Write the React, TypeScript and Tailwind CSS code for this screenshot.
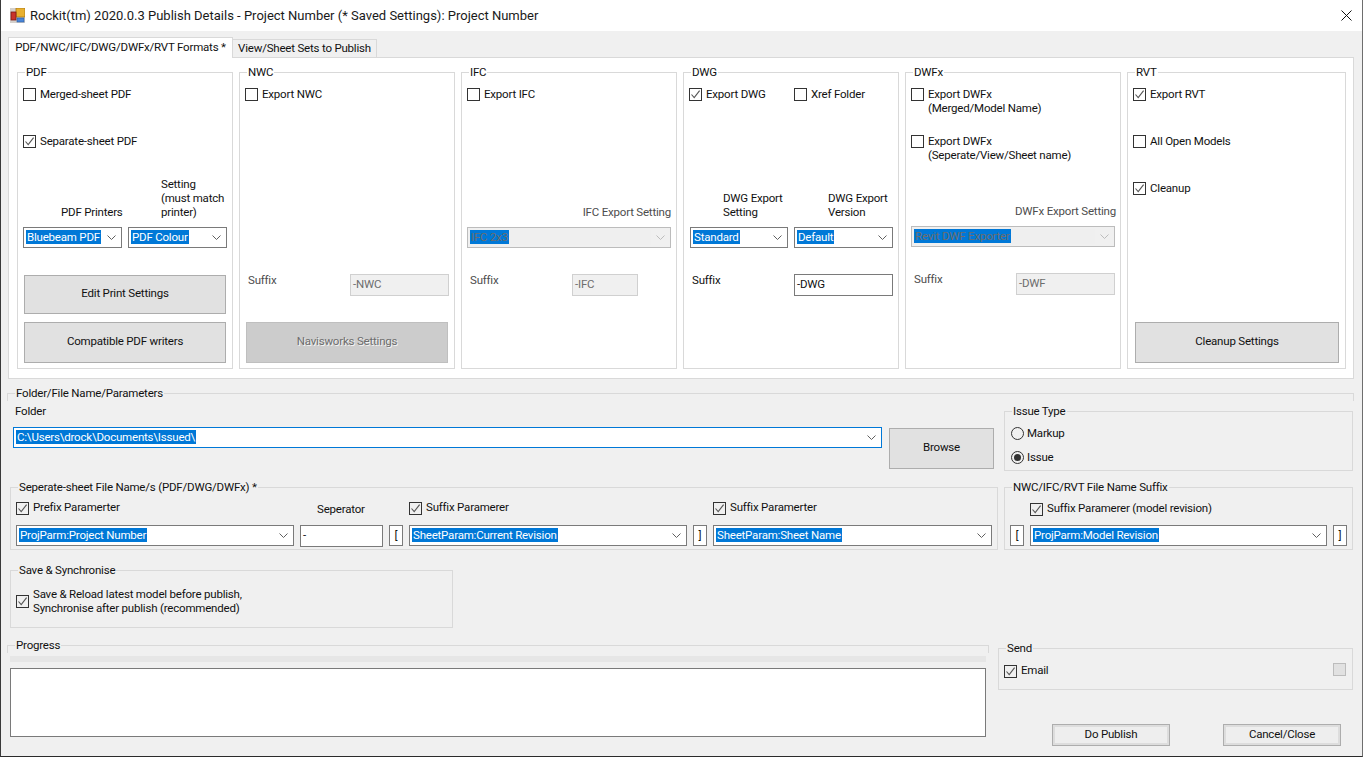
import type { ReactNode } from "react";

const Chevron = ({ disabled = false }: { disabled?: boolean }) => (
  <svg width="9" height="5" viewBox="0 0 9 5" className="shrink-0" fill="none">
    <path d="M0.5 0.5 L4.5 4.5 L8.5 0.5" stroke={disabled ? "#bcbcbc" : "#606060"} strokeWidth="1" />
  </svg>
);

const Tick = () => (
  <svg width="11" height="11" viewBox="0 0 11 11" fill="none">
    <path d="M1.5 5.5 L4.2 8.6 L9.6 1.6" stroke="#555555" strokeWidth="1.1" />
  </svg>
);

const Check = ({ checked = false, className = "", labelClass = "-mt-[1px]", children }: { checked?: boolean; className?: string; labelClass?: string; children?: ReactNode }) => (
  <div className={`flex items-start gap-[4px] ${className}`}>
    <div className="w-[13px] h-[13px] shrink-0 border border-[#333333] flex items-center justify-center">
      {checked && <Tick />}
    </div>
    <div className={`leading-[14px] whitespace-nowrap ${labelClass}`}>{children}</div>
  </div>
);

const Radio = ({ checked = false, children }: { checked?: boolean; children: ReactNode }) => (
  <div className="flex items-center gap-[3px] h-[13px]">
    <div className="w-[13px] h-[13px] rounded-full border border-[#333333] flex items-center justify-center">
      {checked && <div className="w-[7px] h-[7px] rounded-full bg-[#333333]" />}
    </div>
    <div className="leading-[14px] -mt-[1px]">{children}</div>
  </div>
);

const Select = ({ value, className = "", disabled = false, focused = false }: { value: string; className?: string; disabled?: boolean; focused?: boolean }) => (
  <div
    className={`h-[21px] flex items-center pl-[2px] pr-[5px] border shrink-0 ${
      disabled ? "border-[#bcbcbc] bg-[#f0f0f0]" : focused ? "border-[#0078d7] bg-white" : "border-[#7a7a7a] bg-white"
    } ${className}`}
  >
    <div className={`flex-1 min-w-0 h-[15px] mr-[5px] ${disabled ? "bg-[#efefef]" : ""}`}>
      <span
        className={`block w-fit h-[14px] leading-[14px] px-[1px] whitespace-nowrap bg-[#0078d7] ${
          disabled ? "text-[#6d6d6d]" : "text-white"
        }`}
      >
        {value}
      </span>
    </div>
    <Chevron disabled={disabled} />
  </div>
);

const TextBox = ({ value, className = "", disabled = false }: { value: string; className?: string; disabled?: boolean }) => (
  <div
    className={`h-[22px] flex items-center px-[2px] shrink-0 border ${
      disabled ? "border-[#d0d0d0] bg-[#f0f0f0] text-[#6d6d6d]" : "border-[#7a7a7a] bg-white"
    } ${className}`}
  >
    {value}
  </div>
);

const Bracket = ({ value }: { value: string }) => (
  <div className="w-[14px] h-[21px] shrink-0 border border-[#7a7a7a] bg-white flex items-center justify-center">{value}</div>
);

const Btn = ({ label, className = "", disabled = false }: { label: string; className?: string; disabled?: boolean }) => (
  <div
    className={`flex items-center justify-center shrink-0 border pb-[2px] ${
      disabled
        ? "bg-[#cccccc] border-[#bfbfbf] text-[#6d6d6d] [text-shadow:1px_1px_0_#f4f4f4]"
        : "bg-[#e1e1e1] border-[#adadad]"
    } ${className}`}
  >
    {label}
  </div>
);

const Legend = ({ title, bg = "bg-[#f0f0f0]" }: { title: string; bg?: string }) => (
  <div className={`absolute -top-[8px] left-[7px] px-[1px] leading-[14px] whitespace-nowrap ${bg}`}>{title}</div>
);

const Panel = ({ title, className = "w-[216px]", children }: { title: string; className?: string; children: ReactNode }) => (
  <div className={`relative h-[297px] shrink-0 border border-[#d9d9d9] pl-[5px] pt-[15px] ${className}`}>
    <Legend title={title} bg="bg-white" />
    {children}
  </div>
);

// two-line/three-line caption above a combo
const Caption = ({ lines, className = "" }: { lines: string[]; className?: string }) => (
  <div className={`leading-[14px] ${className}`}>
    {lines.map((l) => (
      <div key={l} className="whitespace-nowrap">
        {l}
      </div>
    ))}
  </div>
);

const SuffixRow = ({ value, inputClass, disabled = true, labelClass = "text-[#4d4d4d]", className = "mt-[26px]" }: { value: string; inputClass: string; disabled?: boolean; labelClass?: string; className?: string }) => (
  <div className={`flex items-start h-[22px] ${className}`}>
    <div className={`ml-[3px] -mt-[1px] w-[102px] leading-[14px] ${labelClass}`}>Suffix</div>
    <TextBox value={value} disabled={disabled} className={inputClass} />
  </div>
);

const App = () => {
  return (
    <div className="w-[1363px] h-[757px] overflow-hidden bg-[#f0f0f0] border-l border-r border-b border-l-[#3a3a3a] border-r-[#6e6e6e] border-b-[#2b2b2b] text-[11.5px] tracking-[-0.2px] text-[#111111] font-['Roboto',sans-serif]">
      {/* Title bar */}
      <div className="h-[31px] bg-white flex items-center pl-[9px] pr-[9px] text-[13px] tracking-normal text-[#1a1a1a]">
        <svg width="15" height="15" viewBox="0 0 15 15" className="shrink-0">
          <rect x="0" y="0" width="15" height="15" fill="#d4d0cc" />
          <rect x="6" y="0" width="9" height="9" fill="#e8b030" stroke="#a87818" strokeWidth="0.8" />
          <rect x="1" y="4" width="5" height="8" fill="#c8342c" stroke="#7a1a14" strokeWidth="0.8" />
          <rect x="7" y="10" width="7" height="4" fill="#4a86d8" stroke="#2a5aa0" strokeWidth="0.6" />
        </svg>
        <div className="ml-[5px] flex-1 whitespace-nowrap">
          Rockit(tm) 2020.0.3 Publish Details - Project Number (* Saved Settings): Project Number
        </div>
        <svg width="11" height="11" viewBox="0 0 11 11" fill="none" className="shrink-0 mr-[1px]">
          <path d="M0.5 0.5 L10.5 10.5 M10.5 0.5 L0.5 10.5" stroke="#111111" strokeWidth="1" />
        </svg>
      </div>

      {/* Tabs */}
      <div className="flex items-end h-[26px] pl-[7px]">
        <div className="relative z-10 w-[225px] h-[21px] -mb-[1px] bg-white border border-b-0 border-[#d9d9d9] flex items-center justify-center whitespace-nowrap">
          PDF/NWC/IFC/DWG/DWFx/RVT Formats *
        </div>
        <div className="w-[144px] h-[18px] bg-[#f0f0f0] border border-b-0 border-l-0 border-[#d9d9d9] flex items-center justify-center whitespace-nowrap">
          View/Sheet Sets to Publish
        </div>
      </div>

      {/* Formats tab page */}
      <div className="ml-[7px] w-[1346px] h-[322px] bg-white border border-[#d9d9d9] pl-[8px] pt-[14px] flex gap-[6px]">
        <Panel title="PDF">
          <Check>Merged-sheet PDF</Check>
          <Check checked className="mt-[34px]">
            Separate-sheet PDF
          </Check>
          <div className="flex mt-[29px] h-[42px] items-end">
            <Caption lines={["PDF Printers"]} className="ml-[38px] w-[100px]" />
            <Caption lines={["Setting", "(must match", "printer)"]} />
          </div>
          <div className="flex gap-[6px] mt-[8px]">
            <Select value="Bluebeam PDF" className="w-[99px]" />
            <Select value="PDF Colour" className="w-[99px]" />
          </div>
          <Btn label="Edit Print Settings" className="ml-[1px] mt-[27px] w-[202px] h-[39px]" />
          <Btn label="Compatible PDF writers" className="ml-[1px] mt-[8px] w-[202px] h-[41px]" />
        </Panel>

        <Panel title="NWC">
          <Check>Export NWC</Check>
          <SuffixRow value="-NWC" inputClass="w-[99px]" className="mt-[173px]" />
          <Btn label="Navisworks Settings" disabled className="ml-[1px] mt-[26px] w-[202px] h-[41px]" />
        </Panel>

        <Panel title="IFC">
          <Check>Export IFC</Check>
          <div className="mt-[104px] w-[204px] text-right leading-[14px] text-[#4d4d4d]">IFC Export Setting</div>
          <Select value="IFC 2x3" disabled className="w-[204px] mt-[8px]" />
          <SuffixRow value="-IFC" inputClass="w-[66px]" />
        </Panel>

        <Panel title="DWG">
          <div className="flex">
            <Check className="w-[105px]" checked>
              Export DWG
            </Check>
            <Check>Xref Folder</Check>
          </div>
          <div className="flex mt-[90px]">
            <Caption lines={["DWG Export", "Setting"]} className="ml-[34px] w-[71px]" />
            <Caption lines={["DWG Export", "Version"]} className="ml-[34px]" />
          </div>
          <div className="flex mt-[8px] ml-[1px] gap-[6px]">
            <Select value="Standard" className="w-[98px]" />
            <Select value="Default" className="w-[99px]" />
          </div>
          <SuffixRow value="-DWG" disabled={false} labelClass="text-[#111111]" inputClass="w-[99px]" />
        </Panel>

        <Panel title="DWFx">
          <Check>
            Export DWFx
            <br />
            (Merged/Model Name)
          </Check>
          <div className="mt-[20px]">
            <Check>
              Export DWFx
              <br />
              (Seperate/View/Sheet name)
            </Check>
          </div>
          <div className="mt-[42px] w-[205px] text-right leading-[14px] text-[#4d4d4d]">DWFx Export Setting</div>
          <Select value="Revit DWF Exporter" disabled className="w-[204px] mt-[8px]" />
          <SuffixRow value="-DWF" inputClass="w-[99px]" />
        </Panel>

        <Panel title="RVT" className="w-[219px]">
          <Check checked>Export RVT</Check>
          <Check className="mt-[34px]">All Open Models</Check>
          <Check checked className="mt-[34px]">
            Cleanup
          </Check>
          <Btn label="Cleanup Settings" className="ml-[2px] mt-[127px] w-[204px] h-[41px]" />
        </Panel>
      </div>

      {/* Folder/File Name/Parameters */}
      <div className="relative ml-[6px] mt-[14px] w-[1347px] h-[8px] border-t border-l border-r border-[#d9d9d9]">
        <Legend title="Folder/File Name/Parameters" />
      </div>

      <div className="flex ml-[9px] mt-[10px] h-[60px]">
        <div className="w-[984px]">
          <div className="pl-[5px] -mt-[7px] leading-[14px]">Folder</div>
          <div className="flex items-start mt-[9px] pl-[3px]">
            <Select value="C:\Users\drock\Documents\Issued\" focused className="w-[869px]" />
            <Btn label="Browse" className="ml-[7px] mt-[1px] w-[105px] h-[41px]" />
          </div>
        </div>
        <div className="relative ml-[10px] w-[349px] h-[60px] border border-[#d9d9d9] pl-[6px] pt-[15px]">
          <Legend title="Issue Type" />
          <Radio>Markup</Radio>
          <div className="mt-[11px]">
            <Radio checked>Issue</Radio>
          </div>
        </div>
      </div>

      {/* File name rows */}
      <div className="flex ml-[9px] mt-[16px]">
        <div className="relative w-[988px] h-[63px] border border-[#d9d9d9] pl-[5px] pt-[14px]">
          <Legend title="Seperate-sheet File Name/s (PDF/DWG/DWFx) *" />
          <div className="flex h-[23px]">
            <Check checked className="w-[284px]" labelClass="-mt-[2px]">
              Prefix Paramerter
            </Check>
            <div className="w-[109px] pl-[17px] leading-[14px]">Seperator</div>
            <Check checked className="w-[304px]" labelClass="-mt-[2px]">
              Suffix Paramerer
            </Check>
            <Check checked labelClass="-mt-[2px]">
              Suffix Paramerter
            </Check>
          </div>
          <div className="flex gap-[6px]">
            <Select value="ProjParm:Project Number" className="w-[278px]" />
            <TextBox value="-" className="w-[83px]" />
            <Bracket value="[" />
            <Select value="SheetParam:Current Revision" className="w-[278px]" />
            <Bracket value="]" />
            <Select value="SheetParam:Sheet Name" className="w-[279px]" />
          </div>
        </div>
        <div className="relative ml-[6px] w-[349px] h-[63px] border border-[#d9d9d9] pl-[5px] pt-[15px]">
          <Legend title="NWC/IFC/RVT File Name Suffix" />
          <Check checked className="ml-[20px] h-[22px]" labelClass="-mt-[2px]">
            Suffix Paramerer (model revision)
          </Check>
          <div className="flex gap-[6px]">
            <Bracket value="[" />
            <Select value="ProjParm:Model Revision" className="w-[297px]" />
            <Bracket value="]" />
          </div>
        </div>
      </div>

      {/* Save & Synchronise */}
      <div className="relative ml-[9px] mt-[20px] w-[443px] h-[58px] border border-[#d9d9d9] pl-[5px] pt-[16px]">
        <Legend title="Save & Synchronise" />
        <div className="flex items-center gap-[4px] h-[28px]">
          <div className="w-[13px] h-[13px] shrink-0 border border-[#333333] flex items-center justify-center">
            <Tick />
          </div>
          <div className="leading-[14px] whitespace-nowrap">
            Save & Reload latest model before publish,
            <br />
            Synchronise after publish (recommended)
          </div>
        </div>
      </div>

      {/* Progress and Send */}
      <div className="flex ml-[6px] mt-[17px]">
        <div className="w-[982px]">
          <div className="relative h-[8px] border-t border-l border-r border-[#d9d9d9]">
            <Legend title="Progress" />
          </div>
          <div className="ml-[3px] mt-[3px] w-[976px] h-[6px] bg-[#e6e6e6]" />
          <div className="ml-[3px] mt-[6px] w-[976px] h-[69px] bg-white border border-[#7a7a7a]" />
        </div>
        <div className="ml-[9px] mt-[3px]">
          <div className="relative w-[355px] h-[42px] border border-[#d9d9d9] pl-[5px] pt-[16px] flex justify-between pr-[6px]">
            <Legend title="Send" />
            <Check checked labelClass="-mt-[2px]">
              Email
            </Check>
            <div className="w-[13px] h-[13px] -mt-[2px] bg-[#e1e1e1] border border-[#bcbcbc]" />
          </div>
          <div className="flex mt-[34px] ml-[54px] gap-[53px]">
            <div className="w-[118px] h-[22px] border border-[#adadad] bg-[#eeeeee] shadow-[inset_0_0_0_2px_#dddddd] flex items-center justify-center">
              Do Publish
            </div>
            <div className="w-[118px] h-[22px] border border-[#adadad] bg-[#eeeeee] shadow-[inset_0_0_0_2px_#dddddd] flex items-center justify-center">
              Cancel/Close
            </div>
          </div>
        </div>
      </div>
    </div>
  );
};

export default App;
